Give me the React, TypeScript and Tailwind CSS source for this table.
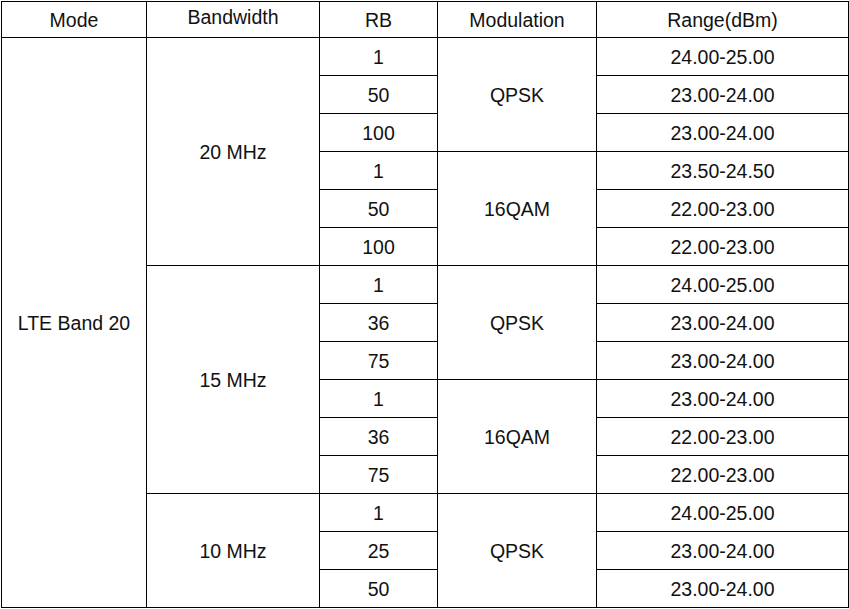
const groups = [
  {
    bw: "20 MHz",
    mods: [
      { mod: "QPSK", rows: [["1", "24.00-25.00"], ["50", "23.00-24.00"], ["100", "23.00-24.00"]] },
      { mod: "16QAM", rows: [["1", "23.50-24.50"], ["50", "22.00-23.00"], ["100", "22.00-23.00"]] },
    ],
  },
  {
    bw: "15 MHz",
    mods: [
      { mod: "QPSK", rows: [["1", "24.00-25.00"], ["36", "23.00-24.00"], ["75", "23.00-24.00"]] },
      { mod: "16QAM", rows: [["1", "23.00-24.00"], ["36", "22.00-23.00"], ["75", "22.00-23.00"]] },
    ],
  },
  {
    bw: "10 MHz",
    mods: [
      { mod: "QPSK", rows: [["1", "24.00-25.00"], ["25", "23.00-24.00"], ["50", "23.00-24.00"]] },
    ],
  },
];

const cell = "border border-black text-center align-middle px-0 pb-0 pt-[2px]";

export default function App() {
  const totalRows = groups.reduce((s, g) => s + g.mods.reduce((t, m) => t + m.rows.length, 0), 0);

  return (
    <div className="w-[849px] h-[609px] bg-white pl-px pt-px" style={{ fontFamily: '"Liberation Sans", Arial, sans-serif' }}>
      <table className="table-fixed border-collapse text-[19.5px] leading-none text-[#111] w-[847px]">
        <colgroup>
          <col className="w-[145px]" />
          <col className="w-[173px]" />
          <col className="w-[118px]" />
          <col className="w-[159px]" />
          <col className="w-[252px]" />
        </colgroup>
        <thead>
          <tr className="h-[36px]">
            <th className={`${cell} font-normal`}>Mode</th>
            <th className={`${cell} font-normal pb-1.5`}>Bandwidth</th>
            <th className={`${cell} font-normal`}>RB</th>
            <th className={`${cell} font-normal`}>Modulation</th>
            <th className={`${cell} font-normal`}>Range(dBm)</th>
          </tr>
        </thead>
        <tbody>
          {groups.map((g, gi) => {
            const bwRows = g.mods.reduce((t, m) => t + m.rows.length, 0);
            return g.mods.map((m, mi) =>
              m.rows.map(([rb, range], ri) => (
                <tr key={`${gi}-${mi}-${ri}`} className="h-[38px]">
                  {gi === 0 && mi === 0 && ri === 0 && (
                    <td rowSpan={totalRows} className={cell}>LTE Band 20</td>
                  )}
                  {mi === 0 && ri === 0 && (
                    <td rowSpan={bwRows} className={cell}>{g.bw}</td>
                  )}
                  <td className={cell}>{rb}</td>
                  {ri === 0 && (
                    <td rowSpan={m.rows.length} className={cell}>{m.mod}</td>
                  )}
                  <td className={cell}>{range}</td>
                </tr>
              ))
            );
          })}
        </tbody>
      </table>
    </div>
  );
}
